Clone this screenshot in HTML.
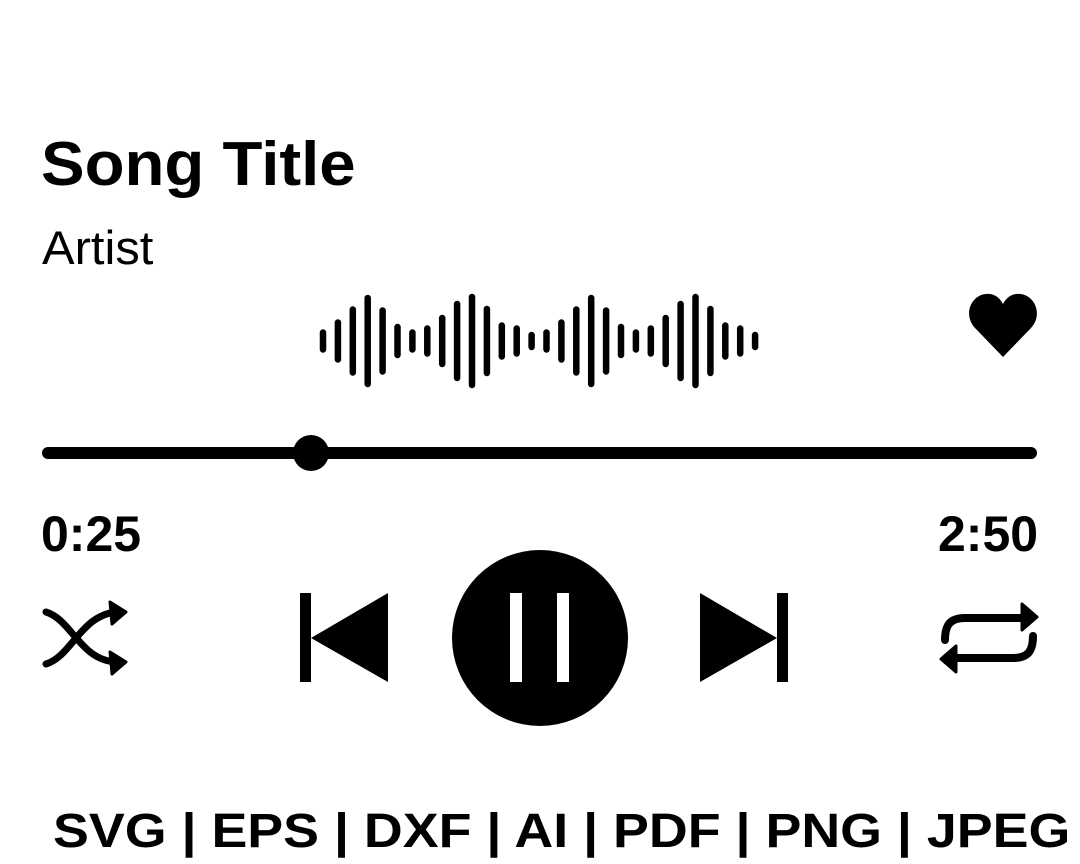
<!DOCTYPE html>
<html><head><style>
html,body{margin:0;padding:0;background:#fff;}
body{width:1080px;height:864px;position:relative;overflow:hidden;font-family:"Liberation Sans",sans-serif;color:#000;}
.t{position:absolute;white-space:nowrap;line-height:1;transform-origin:0 0;}
</style></head><body>
<div class="t" style="left:41px;top:134px;font-size:62px;font-weight:bold;transform:scaleX(1.054);">Song Title</div>
<div class="t" style="left:42px;top:224px;font-size:47px;transform:scaleX(1.04);">Artist</div>
<div class="t" style="left:41px;top:509px;font-size:50px;font-weight:bold;">0:25</div>
<div class="t" style="left:938px;top:509px;font-size:50px;font-weight:bold;">2:50</div>
<div class="t" style="left:53px;top:808px;font-size:48px;font-weight:bold;transform:scaleX(1.12);">SVG | EPS | DXF | AI | PDF | PNG | JPEG</div>
<svg width="1080" height="864" style="position:absolute;left:0;top:0">
<g stroke="#000" stroke-width="6.5" stroke-linecap="round" id="w"></g>
<path d="M1003 357 L975 328 C962 314 972 292 990 294 C997 295 1001 300 1003 304 C1005 300 1009 295 1016 294 C1034 292 1044 314 1031 328 Z" fill="#000"/>
<line x1="48" y1="453" x2="1031" y2="453" stroke="#000" stroke-width="12" stroke-linecap="round"/>
<circle cx="311" cy="453" r="18" fill="#000"/>
<g fill="none" stroke="#000" stroke-width="7" stroke-linecap="round">
<path d="M46 612 C72 620 80 660 116 662"/>
<path d="M46 664 C72 656 80 616 116 612"/>
</g>
<path d="M110 602 L126 612 L112 624 Z M110 652 L126 662 L112 674 Z" fill="#000" stroke="#000" stroke-width="3" stroke-linejoin="round"/>
<rect x="300" y="593" width="11" height="89" fill="#000"/>
<path d="M388 593 L311 638 L388 682 Z" fill="#000"/>
<circle cx="540" cy="638" r="88" fill="#000"/>
<rect x="510" y="593" width="12" height="89" fill="#fff"/>
<rect x="557" y="593" width="12" height="89" fill="#fff"/>
<path d="M700 593 L777 638 L700 682 Z" fill="#000"/>
<rect x="777" y="593" width="11" height="89" fill="#000"/>
<g fill="none" stroke="#000" stroke-width="8" stroke-linecap="round">
<path d="M945 640 C945 625 950 618 965 618 L1025 618"/>
<path d="M1033 636 C1033 651 1028 658 1013 658 L955 658"/>
</g>
<path d="M1022 604 L1037 617 L1022 630 Z M956 646 L941 659 L956 672 Z" fill="#000" stroke="#000" stroke-width="3" stroke-linejoin="round"/>
</svg>
<script>
var h=[23,43,69,92,67,34,23,31,52,80,94,70,37,31,18,23,43,69,92,67,34,23,31,52,80,94,70,37,31,18];
var g=document.getElementById('w'),s='';
for(var i=0;i<30;i++){var x=323+i*14.9,y=341;s+='<line x1="'+x+'" x2="'+x+'" y1="'+(y-h[i]/2+3)+'" y2="'+(y+h[i]/2-3)+'"/>';}
g.innerHTML=s;
</script>
</body></html>
